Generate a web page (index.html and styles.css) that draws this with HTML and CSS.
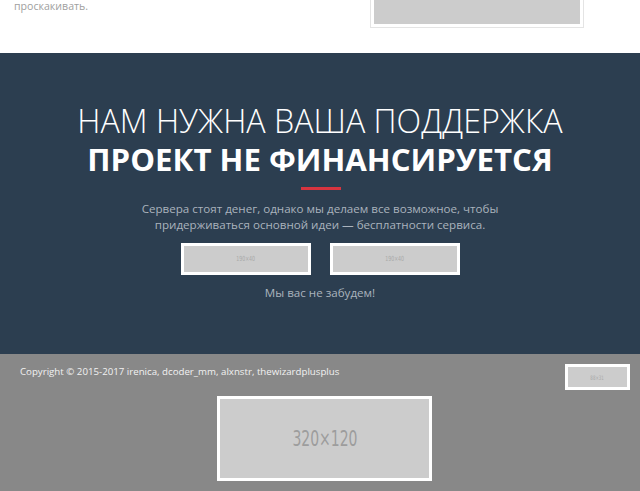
FILE: index.html
```html
<!DOCTYPE html>
<html lang="ru">
<head>
<meta charset="utf-8">
<title>Поддержка</title>
<link rel="stylesheet" href="styles.css">
</head>
<body>
<section class="intro">
  <div class="intro-text">
    <p>проскакивать.</p>
  </div>
  <div class="intro-figure">
    <div class="thumb"><div class="ph ph-intro"></div></div>
  </div>
</section>

<section class="support">
  <h2 class="support-title">
    <span class="title-light">НАМ НУЖНА ВАША ПОДДЕРЖКА</span>
    <span class="title-bold">ПРОЕКТ НЕ ФИНАНСИРУЕТСЯ</span>
  </h2>
  <div class="divider"></div>
  <p class="support-text">Сервера стоят денег, однако мы делаем все возможное, чтобы<br>придерживаться основной идеи — бесплатности сервиса.</p>
  <div class="donate-row">
    <a class="donate ph-box" href="#"><span class="ph ph-btn"><span class="ph-label">190×40</span></span></a>
    <a class="donate ph-box" href="#"><span class="ph ph-btn"><span class="ph-label">190×40</span></span></a>
  </div>
  <p class="support-thanks">Мы вас не забудем!</p>
</section>

<footer class="footer">
  <div class="footer-top">
    <p class="copyright">Copyright © 2015-2017 irenica, dcoder_mm, alxnstr, thewizardplusplus</p>
    <span class="counter ph-box"><span class="ph ph-counter"><span class="ph-label">88×31</span></span></span>
  </div>
  <div class="footer-banner">
    <span class="banner ph-box"><span class="ph ph-banner"><span class="ph-label">320×120</span></span></span>
  </div>
</footer>
</body>
</html>
```

FILE: styles.css
```css
html, body {
  margin: 0;
  padding: 0;
}
body {
  font-family: "Open Sans", "Liberation Sans", sans-serif;
  background: #888888;
  width: 640px;
  height: 491px;
  overflow: hidden;
}

/* intro (scrolled top part) */
.intro {
  height: 53px;
  background: #ffffff;
  display: flex;
  align-items: flex-start;
  overflow: hidden;
}
.intro-text {
  width: 356px;
  padding-left: 14px;
  margin-top: 0;
}
.intro-text p {
  margin: 0;
  font-size: 10.6px;
  line-height: 12px;
  color: #a0a0a0;
}
.intro-figure {
  margin-top: -100px;
}
.thumb {
  width: 206px;
  height: 120px;
  padding: 3px;
  border: 1px solid #e4e4e4;
  background: #ffffff;
}
.ph {
  display: flex;
  align-items: center;
  justify-content: center;
  background: #cccccc;
  color: #9a9a9a;
  font-family: "DejaVu Sans Condensed", "Open Sans", sans-serif;
  text-decoration: none;
}
.ph-label {
  display: inline-block;
  transform: scaleX(0.74);
}
.ph-intro {
  width: 206px;
  height: 120px;
}

/* support */
.support {
  background: #2c3e50;
  height: 301px;
  box-sizing: border-box;
  padding-top: 49px;
  text-align: center;
}
.support-title {
  margin: 0;
  font-weight: 400;
  color: #ffffff;
  line-height: 38px;
}
.support-title span {
  display: block;
}
.title-light {
  font-weight: 300;
  font-size: 32.2px;
}
.title-bold {
  font-weight: 700;
  font-size: 31.2px;
}
.divider {
  width: 40px;
  height: 3px;
  background: #d7343f;
  margin: 9px 0 0 301px;
}
.support-text {
  margin: 11px 0 0;
  font-size: 11.6px;
  line-height: 16px;
  color: #aab3bd;
}
.donate-row {
  display: flex;
  justify-content: center;
  gap: 19px;
  margin-top: 10px;
  padding-left: 1px;
}
.ph-box {
  display: block;
  border: 3px solid #ffffff;
  background: #ffffff;
  text-decoration: none;
}
.donate {
  width: 124px;
  height: 26px;
}
.ph-btn {
  width: 124px;
  height: 26px;
  font-size: 7px;
  color: #a8a8a8;
}
.support-thanks {
  margin: 10px 0 0;
  font-size: 11.6px;
  line-height: 16px;
  color: #aab3bd;
}

/* footer */
.footer {
  background: #888888;
}
.footer-top {
  display: flex;
  justify-content: space-between;
  align-items: flex-start;
  padding: 10px 10px 0 20px;
}
.copyright {
  margin: 0;
  font-size: 9.7px;
  line-height: 16px;
  color: #f2f2f2;
}
.counter {
  width: 59px;
  height: 20px;
}
.ph-counter {
  width: 59px;
  height: 20px;
  font-size: 6px;
  color: #aaaaaa;
}
.footer-banner {
  display: flex;
  padding-left: 217px;
  margin-top: 6px;
}
.banner {
  width: 209px;
  height: 79px;
}
.ph-banner {
  width: 209px;
  height: 79px;
  font-size: 21px;
  color: #9d9d9d;
}
```
